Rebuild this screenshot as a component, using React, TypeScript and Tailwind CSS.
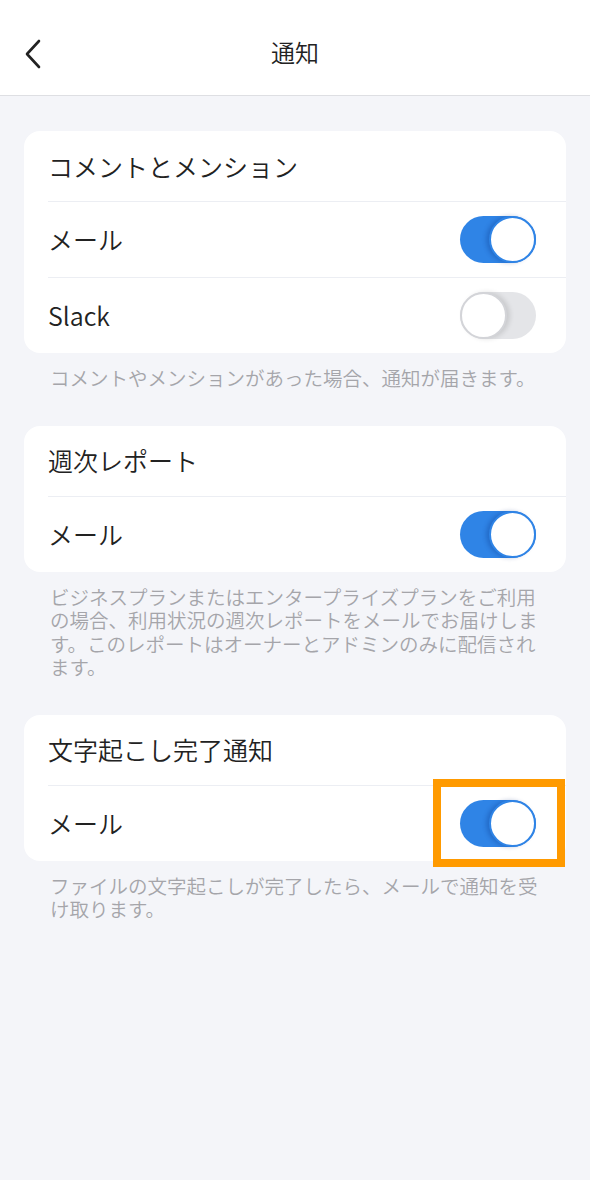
import React from "react";

function Toggle({ on }: { on: boolean }) {
  return (
    <div
      className={
        "relative w-[76px] h-[47px] rounded-full " +
        (on ? "bg-[#2f84e6]" : "bg-[#e4e5e8]")
      }
    >
      {on ? (
        <div className="absolute right-0 top-0 w-[47px] h-[47px] rounded-full bg-white border-[2px] border-[#2f84e6] shadow-[-3px_0_4px_rgba(0,40,120,0.25)]" />
      ) : (
        <div className="absolute left-0 top-0 w-[47px] h-[47px] rounded-full bg-white border-[2px] border-[#d3d4d8] shadow-[3px_0_5px_rgba(0,0,0,0.12)]" />
      )}
    </div>
  );
}

function Row({
  label,
  on,
  highlight,
}: {
  label: string;
  on: boolean;
  highlight?: boolean;
}) {
  return (
    <div className="ml-[24px] h-[76px] border-t border-[#eceef3] flex items-center justify-between pr-[30px]">
      <span className="text-[25px] text-[#222] leading-none font-[350]">{label}</span>
      <div className="relative">
        <Toggle on={on} />
        {highlight && (
          <div className="absolute -left-[27px] -top-[21px] w-[132px] h-[88px] border-[8px] border-[#ff9a00]" />
        )}
      </div>
    </div>
  );
}

function Section({
  title,
  rows,
  note,
}: {
  title: string;
  rows: { label: string; on: boolean; highlight?: boolean }[];
  note: string;
}) {
  return (
    <section className="flex flex-col">
      <div className="bg-white rounded-2xl">
        <div className="h-[70px] pl-[24px] flex items-center text-[25px] text-[#222] leading-none font-[350]">
          {title}
        </div>
        {rows.map((r) => (
          <Row key={r.label} {...r} />
        ))}
      </div>
      <p className="pl-[26px] pr-[24px] pt-[13px] text-[19.5px] leading-[23.5px] text-[#a5a5aa] font-[350]">
        {note}
      </p>
    </section>
  );
}

export default function App() {
  return (
    <div
      className="min-h-[1180px] bg-[#f4f5f9]"
      style={{ fontFamily: '"Noto Sans CJK JP", "Noto Sans", sans-serif' }}
    >
      <header className="relative h-[96px] bg-white border-b border-[#dedfe3] flex items-center justify-center">
        <svg
          className="absolute left-[23px] top-[39px]"
          width="20"
          height="30"
          viewBox="0 0 20 30"
          fill="none"
        >
          <path
            d="M16 2 L4 15 L16 28"
            stroke="#222"
            strokeWidth="2.6"
            strokeLinecap="round"
            strokeLinejoin="round"
          />
        </svg>
        <h1 className="text-[24px] text-[#222] font-[350] leading-none mt-[8px]">
          通知
        </h1>
      </header>
      <main className="px-[24px] pt-[35px] flex flex-col gap-[36px]">
        <Section
          title="コメントとメンション"
          rows={[
            { label: "メール", on: true },
            { label: "Slack", on: false },
          ]}
          note="コメントやメンションがあった場合、通知が届きます。"
        />
        <Section
          title="週次レポート"
          rows={[{ label: "メール", on: true }]}
          note="ビジネスプランまたはエンタープライズプランをご利用の場合、利用状況の週次レポートをメールでお届けします。このレポートはオーナーとアドミンのみに配信されます。"
        />
        <Section
          title="文字起こし完了通知"
          rows={[{ label: "メール", on: true, highlight: true }]}
          note="ファイルの文字起こしが完了したら、メールで通知を受け取ります。"
        />
      </main>
    </div>
  );
}
